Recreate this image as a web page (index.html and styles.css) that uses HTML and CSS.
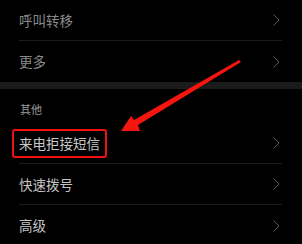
FILE: index.html
```html
<!DOCTYPE html>
<html lang="zh-CN">
<head>
    <meta charset="UTF-8">
    <meta name="viewport" content="width=device-width, initial-scale=1.0">
    <title>通话设置</title>
    <link rel="stylesheet" href="styles.css">
</head>
<body>
    <div class="screen">
        <div class="group dim">
            <div class="row"><span class="label">呼叫转移</span><svg class="chev" width="7" height="12" viewBox="0 0 7 12"><polyline points="0.5,0.5 6,6 0.5,11.5"/></svg></div>
            <div class="row last"><span class="label">更多</span><svg class="chev" width="7" height="12" viewBox="0 0 7 12"><polyline points="0.5,0.5 6,6 0.5,11.5"/></svg></div>
        </div>
        <div class="band"></div>
        <div class="section-title">其他</div>
        <div class="group">
            <div class="row"><span class="label boxed">来电拒接短信</span><svg class="chev" width="7" height="12" viewBox="0 0 7 12"><polyline points="0.5,0.5 6,6 0.5,11.5"/></svg></div>
            <div class="row"><span class="label">快速拨号</span><svg class="chev" width="7" height="12" viewBox="0 0 7 12"><polyline points="0.5,0.5 6,6 0.5,11.5"/></svg></div>
            <div class="row last"><span class="label">高级</span><svg class="chev" width="7" height="12" viewBox="0 0 7 12"><polyline points="0.5,0.5 6,6 0.5,11.5"/></svg></div>
        </div>

        <svg class="arrow" width="302" height="244" viewBox="0 0 302 244">
            <polygon points="239,60 241,62 138,125 140,131 121,131 131,116 134,120" fill="#f5150f"/>
        </svg>
    </div>
</body>
</html>
```

FILE: styles.css
```css
html, body {
    margin: 0;
    padding: 0;
    background: #000;
}
body {
    font-family: "Noto Sans CJK SC", "Noto Sans", sans-serif;
    color: #c4c4c4;
}
.screen {
    position: relative;
    width: 302px;
    height: 244px;
    overflow: hidden;
}
.row {
    height: 40px;
    margin: 0 20px 0 19px;
    border-bottom: 1px solid #1c1c1c;
    display: flex;
    align-items: center;
    justify-content: space-between;
}
.row.last { border-bottom: none; height: 41px; }
.label {
    font-size: 13.5px;
    line-height: 19px;
}
.dim .label { color: #8a8a8a; }
.boxed {
    border: 2px solid #f01010;
    border-radius: 3px;
    padding: 3px 5px;
    margin-left: -7px;
    color: #c8c8c8;
}
.chev {
    margin-right: 2px;
    fill: none;
    stroke: #585858;
    stroke-width: 1;
}
.band {
    height: 7px;
    background: #1b1b1b;
}
.section-title {
    height: 29px;
    padding: 5px 0 0 20px;
    display: flex;
    align-items: center;
    font-size: 11px;
    color: #9a9a9a;
}
.arrow {
    position: absolute;
    left: 0;
    top: 0;
}
```
